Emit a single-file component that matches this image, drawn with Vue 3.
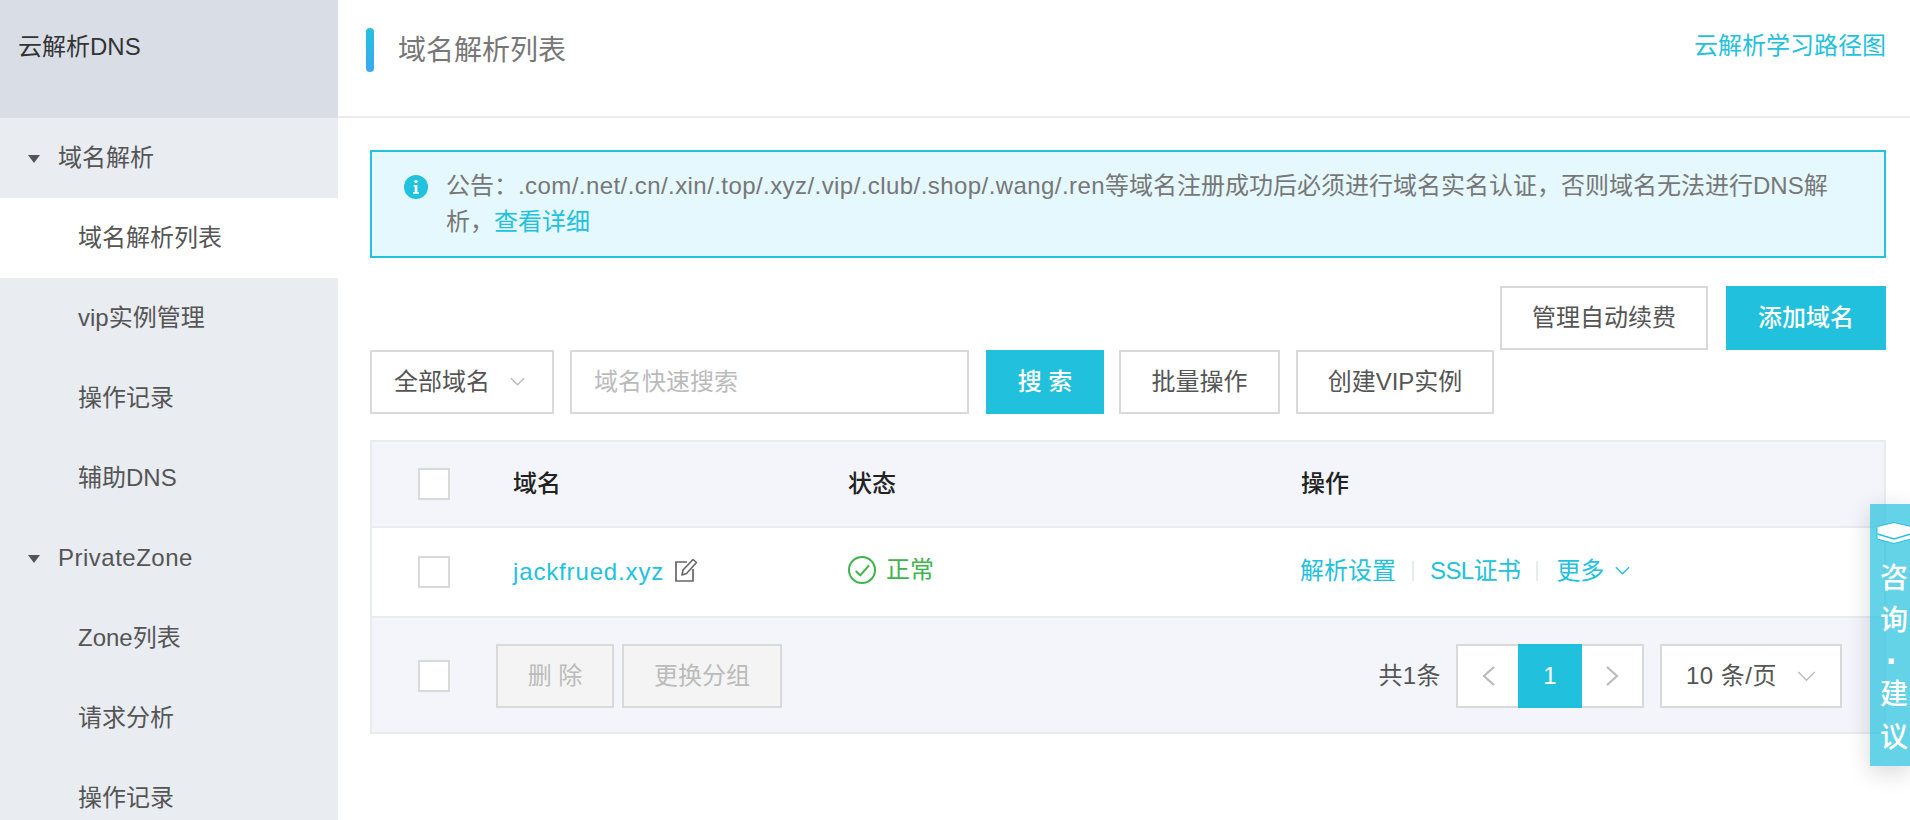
<script setup>
const navGroups = [
  { title: '域名解析', items: [
    { label: '域名解析列表', active: true },
    { label: 'vip实例管理' },
    { label: '操作记录' },
    { label: '辅助DNS' },
  ] },
  { title: 'PrivateZone', latin: true, items: [
    { label: 'Zone列表' },
    { label: '请求分析' },
    { label: '操作记录' },
  ] },
]
</script>

<template>
  <div class="page">
    <aside class="sidebar">
      <div class="brand">云解析DNS</div>
      <template v-for="group in navGroups" :key="group.title">
        <div class="nav-group" :class="{ latin: group.latin }"><i class="caret"></i>{{ group.title }}</div>
        <div
          v-for="item in group.items"
          :key="group.title + item.label"
          class="nav-item"
          :class="{ active: item.active }"
        >{{ item.label }}</div>
      </template>
    </aside>

    <main class="main">
      <header class="topbar">
        <div class="title-wrap">
          <i class="title-mark"></i>
          <h1 class="title">域名解析列表</h1>
        </div>
        <a class="learn">云解析学习路径图</a>
      </header>

      <div class="content">
        <div class="notice">
          <svg class="info" viewBox="0 0 24 24" width="24" height="24">
            <circle cx="12" cy="12" r="12" fill="#22c1dd" />
            <circle cx="12" cy="6.6" r="1.7" fill="#fff" />
            <path d="M9.6 10h3.8v7.2h1.6v1.5H9v-1.5h1.700v-5.700H9.600z" fill="#fff" />
          </svg>
          <p class="notice-text">公告：<span class="domains">.com/.net/.cn/.xin/.top/.xyz/.vip/.club/.shop/.wang/.ren</span>等域名注册成功后必须进行域名实名认证，否则域名无法进行DNS解<br />析，<a class="notice-link">查看详细</a></p>
        </div>

        <div class="actions-top">
          <button class="btn btn-auto">管理自动续费</button>
          <button class="btn primary btn-add">添加域名</button>
        </div>

        <div class="actions-row">
          <div class="select scope">
            <span>全部域名</span>
            <svg viewBox="0 0 16 10" width="15" height="10"><path d="M1 1l7 7 7-7" fill="none" stroke="#bbb" stroke-width="1.5" /></svg>
          </div>
          <div class="search">域名快速搜索</div>
          <button class="btn primary btn-search">搜 索</button>
          <button class="btn btn-batch">批量操作</button>
          <button class="btn btn-vip">创建VIP实例</button>
        </div>

        <section class="table">
          <div class="row head">
            <span class="check"></span>
            <span>域名</span>
            <span>状态</span>
            <span>操作</span>
          </div>
          <div class="row body">
            <span class="check"></span>
            <span class="domain-cell">
              <a class="domain">jackfrued.xyz</a>
              <svg viewBox="0 0 24 24" width="24" height="24" class="edit">
                <path d="M13 4H2v19h17V11" fill="none" stroke="#666" stroke-width="1.7" />
                <path d="M8 17l1-5L19 1.500l3.500 3L12.500 15.500z" fill="none" stroke="#666" stroke-width="1.6" stroke-linejoin="round" />
              </svg>
            </span>
            <span class="status">
              <svg viewBox="0 0 28 28" width="28" height="28">
                <circle cx="14" cy="14" r="13" fill="none" stroke="#3cb54b" stroke-width="2" />
                <path d="M7.700 15l4.600 4.300L21 9.300" fill="none" stroke="#3cb54b" stroke-width="2" />
              </svg>
              正常
            </span>
            <span class="ops">
              <a>解析设置</a><i class="sep"></i><a class="ssl">SSL证书</a><i class="sep"></i><a class="more-link">更多</a>
              <svg viewBox="0 0 16 10" width="15" height="10" class="more"><path d="M1 1l7 7 7-7" fill="none" stroke="#22c1dd" stroke-width="1.500" /></svg>
            </span>
          </div>
          <div class="foot">
            <span class="check foot-check"></span>
            <button class="btn disabled btn-del">删 除</button>
            <button class="btn disabled btn-group">更换分组</button>
            <span class="total">共1条</span>
            <div class="pager">
              <span class="page-arrow">
                <svg viewBox="0 0 13 20" width="13" height="20"><path d="M12 1L2 10l10 9" fill="none" stroke="#bbb" stroke-width="2.200" /></svg>
              </span>
              <span class="page-num">1</span>
              <span class="page-arrow">
                <svg viewBox="0 0 13 20" width="13" height="20"><path d="M1 1l10 9-10 9" fill="none" stroke="#bbb" stroke-width="2.200" /></svg>
              </span>
            </div>
            <div class="select size">
              <span class="size-label">10 条/页</span>
              <svg viewBox="0 0 20 12" width="19" height="11"><path d="M1 1l9 9 9-9" fill="none" stroke="#bbb" stroke-width="1.500" /></svg>
            </div>
          </div>
        </section>
      </div>
    </main>

    <aside class="consult">
      <svg viewBox="0 0 36 22" width="36" height="22" class="hat">
        <path d="M1 4.500L18 .5l17 4v12.500L18 21.500 1 17z" fill="#fff" stroke="#22c1dd" stroke-width="1" />
        <path d="M1.500 12l16.500 5 16.500-5" fill="none" stroke="#22c1dd" stroke-width="1.400" />
      </svg>
      <span>咨</span><span>询</span><span class="dot">·</span><span>建</span><span class="last">议</span>
    </aside>
  </div>
</template>

<style>
html, body { margin: 0; background: #fff; overflow: hidden; }
</style>

<style scoped>
.page {
  position: relative;
  display: flex;
  width: 1910px;
  height: 820px;
  overflow: hidden;
  background: #fff;
  color: #555;
  font: 24px/36px "Liberation Sans", "Noto Sans CJK SC", sans-serif;
}
a { cursor: pointer; }

.sidebar {
  flex: 0 0 338px;
  background: #e9ecf1;
  overflow: hidden;
}
.brand {
  height: 118px;
  box-sizing: border-box;
  padding: 29px 0 0 18px;
  background: #d9dee6;
  color: #333;
}
.nav-group {
  display: flex;
  align-items: center;
  height: 80px;
  padding-left: 28px;
  color: #555;
}
.nav-group.latin { letter-spacing: 0.5px; }
.caret {
  width: 0;
  height: 0;
  margin: 2px 18px 0 0;
  border-left: 6px solid transparent;
  border-right: 6px solid transparent;
  border-top: 8px solid #555;
}
.nav-item {
  display: flex;
  align-items: center;
  height: 80px;
  padding-left: 78px;
  color: #555;
}
.nav-item.active { background: #fff; }

.main { flex: 1; min-width: 0; }
.topbar {
  display: flex;
  justify-content: space-between;
  height: 118px;
  box-sizing: border-box;
  padding: 28px 24px 0 28px;
  border-bottom: 2px solid #ebecf0;
}
.title-wrap { display: flex; align-items: flex-start; }
.title-mark {
  width: 8px;
  height: 44px;
  border-radius: 4px;
  background: linear-gradient(#22c3de, #3ba8f0);
}
.title {
  margin: 5px 0 0 24px;
  color: #777;
  font-size: 28px;
  line-height: 36px;
  font-weight: 400;
}
.learn { color: #22c1dd; }

.content { padding: 32px 24px 0 32px; }
.notice {
  display: flex;
  box-sizing: border-box;
  height: 108px;
  padding: 16px 30px 0 32px;
  border: 2px solid #22c3dd;
  background: #e4f8fd;
}
.info { flex: none; margin: 7px 18px 0 0; }
.notice-text { margin: 0; color: #777; white-space: nowrap; }
.domains { letter-spacing: 0.43px; }
.notice-link { color: #22c1dd; }

.actions-top {
  display: flex;
  justify-content: flex-end;
  gap: 18px;
  margin-top: 28px;
}
.actions-row { display: flex; }

.btn {
  height: 64px;
  box-sizing: border-box;
  padding: 0;
  border: 2px solid #d9d9d9;
  background: #fff;
  color: #555;
  font: inherit;
}
.btn.primary {
  border-color: #21c1dd;
  background: #21c1dd;
  color: #fff;
  font-weight: 500;
}
.btn.disabled { background: #f4f4f4; color: #bbb; }
.btn-auto { width: 208px; }
.btn-add { width: 160px; }
.btn-search { width: 118px; margin-left: 17px; }
.btn-batch { width: 161px; margin-left: 15px; }
.btn-vip { width: 198px; margin-left: 16px; }
.btn-del { width: 118px; margin-left: 46px; }
.btn-group { width: 160px; margin-left: 8px; }

.select {
  display: flex;
  align-items: center;
  justify-content: space-between;
  height: 64px;
  box-sizing: border-box;
  border: 2px solid #d9d9d9;
  background: #fff;
}
.scope { width: 184px; padding: 0 27px 0 22px; }
.search {
  display: flex;
  align-items: center;
  width: 399px;
  height: 64px;
  box-sizing: border-box;
  margin-left: 16px;
  padding-left: 22px;
  border: 2px solid #d9d9d9;
  color: #bbb;
}

.table {
  margin-top: 26px;
  border: 2px solid #e8ebf0;
}
.row {
  display: grid;
  grid-template-columns: 141px 335px 453px 1fr;
  align-items: center;
  border-bottom: 2px solid #e8ebf0;
}
.head {
  height: 84px;
  background: #f3f5fa;
  color: #222;
  font-weight: 500;
}
.body { height: 88px; }
.check {
  display: block;
  width: 32px;
  height: 32px;
  box-sizing: border-box;
  margin-left: 46px;
  border: 2px solid #d9d9d9;
  background: #fff;
}
.domain-cell { display: flex; align-items: center; gap: 10px; }
.domain { color: #22c1dd; letter-spacing: 0.85px; }
.edit { margin-top: -4px; }
.status {
  display: flex;
  align-items: center;
  gap: 10px;
  margin-top: -5px;
  color: #3cb54b;
}
.ops {
  display: flex;
  align-items: center;
  margin: -2px 0 0 -1px;
  color: #22c1dd;
}
.sep {
  width: 2px;
  height: 20px;
  margin: 0 16px;
  background: #e8ebf0;
}
.ssl { letter-spacing: -0.6px; }
.more-link { margin-left: 2px; }
.more { margin-left: 11px; }

.foot {
  display: flex;
  align-items: center;
  box-sizing: border-box;
  padding: 26px 42px 24px 0;
  background: #f3f5fa;
}
.foot-check { flex: none; }
.total { margin: 0 15px 0 auto; letter-spacing: 0.4px; }
.pager {
  display: flex;
  width: 188px;
  height: 64px;
  box-sizing: border-box;
  border: 2px solid #d9d9d9;
  background: #fff;
}
.page-arrow {
  display: flex;
  flex: 1;
  align-items: center;
  justify-content: center;
}
.page-num {
  display: flex;
  flex: 0 0 64px;
  align-items: center;
  justify-content: center;
  margin: -2px 0;
  background: #21c1dd;
  color: #fff;
}
.size {
  width: 182px;
  margin-left: 16px;
  padding: 0 24px;
}
.size-label { letter-spacing: 0.5px; }

.consult {
  position: absolute;
  top: 504px;
  right: 0;
  display: flex;
  flex-direction: column;
  align-items: center;
  width: 40px;
  height: 262px;
  box-sizing: border-box;
  padding: 18px 0 0 8px;
  overflow: hidden;
  background: rgba(34, 193, 221, 0.7);
  box-shadow: 0 6px 24px rgba(0, 0, 0, 0.16);
  color: #fff;
  font-size: 28px;
  line-height: 42px;
  font-weight: 500;
}
.hat { flex: none; margin-bottom: 14px; }
.consult span { flex: none; width: 36px; text-align: center; }
.consult .dot {
  height: 32px;
  margin-left: -4px;
  font-size: 36px;
  line-height: 40px;
  font-weight: 700;
}
.consult .last { margin-top: 1px; }
</style>
